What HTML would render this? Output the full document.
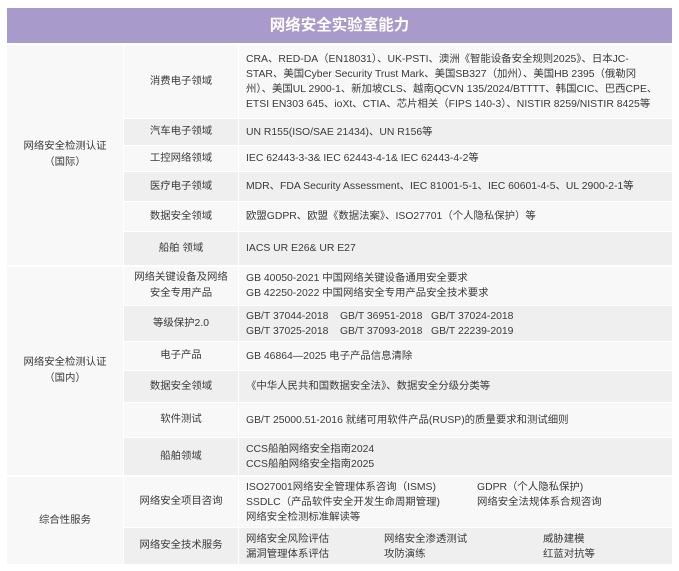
<!DOCTYPE html>
<html><head><meta charset="utf-8"><style>
body{margin:0;background:#fff;width:679px;height:571px;overflow:hidden;font-family:"Liberation Sans","Noto Sans CJK SC",sans-serif;color:#3a3a3a;font-size:10.4px}
.h{position:absolute;left:7px;top:8px;width:665px;height:35px;background:#a89bcb;color:#fff;font-size:15.5px;font-weight:bold;text-align:center;line-height:35px}
.c{position:absolute;display:flex;align-items:center;box-sizing:border-box}
.a{background:#f8f8f8}.g{background:#efefef}
.c1{left:7px;width:116px;justify-content:center;text-align:center;line-height:16px}
.c2{left:124px;width:114px;justify-content:center;text-align:center;line-height:16px}
.c3{left:239px;width:433px;padding-left:7px;line-height:15px;white-space:nowrap}
</style></head><body>
<div class="h">网络安全实验室能力</div>
<div class="c a c1" style="top:45px;height:220px">网络安全检测认证<br>（国际）</div>
<div class="c a c1" style="top:267px;height:208px">网络安全检测认证<br>（国内）</div>
<div class="c a c1" style="top:477px;height:87px">综合性服务</div>

<div class="c a c2" style="top:45px;height:73px">消费电子领域</div>
<div class="c a c3" style="top:45px;height:73px"><div>CRA、RED-DA（EN18031）、UK-PSTI、澳洲《智能设备安全规则2025》、日本JC-<br>STAR、美国Cyber Security Trust Mark、美国SB327（加州）、美国HB 2395（俄勒冈<br>州）、美国UL 2900-1、新加坡CLS、越南QCVN 135/2024/BTTTT、韩国CIC、巴西CPE、<br>ETSI EN303 645、ioXt、CTIA、芯片相关（FIPS 140-3）、NISTIR 8259/NISTIR 8425等</div></div>
<div class="c g c2" style="top:119px;height:26px">汽车电子领域</div>
<div class="c g c3" style="top:119px;height:26px">UN R155(ISO/SAE 21434)、UN R156等</div>
<div class="c a c2" style="top:146px;height:25px">工控网络领域</div>
<div class="c a c3" style="top:146px;height:25px">IEC 62443-3-3&amp; IEC 62443-4-1&amp; IEC 62443-4-2等</div>
<div class="c g c2" style="top:172px;height:29px">医疗电子领域</div>
<div class="c g c3" style="top:172px;height:29px">MDR、FDA Security Assessment、IEC 81001-5-1、IEC 60601-4-5、UL 2900-2-1等</div>
<div class="c a c2" style="top:202px;height:29px">数据安全领域</div>
<div class="c a c3" style="top:202px;height:29px">欧盟GDPR、欧盟《数据法案》、ISO27701（个人隐私保护）等</div>
<div class="c g c2" style="top:232px;height:33px">船舶 领域</div>
<div class="c g c3" style="top:232px;height:33px">IACS UR E26&amp; UR E27</div>

<div class="c a c2" style="top:267px;height:38px">网络关键设备及网络<br>安全专用产品</div>
<div class="c a c3" style="top:267px;height:38px"><div>GB 40050-2021 中国网络关键设备通用安全要求<br>GB 42250-2022 中国网络安全专用产品安全技术要求</div></div>
<div class="c g c2" style="top:306px;height:35px">等级保护2.0</div>
<div class="c g c3" style="top:306px;height:35px"><div>GB/T 37044-2018&nbsp;&nbsp;&nbsp; GB/T 36951-2018&nbsp;&nbsp; GB/T 37024-2018<br>GB/T 37025-2018&nbsp;&nbsp;&nbsp; GB/T 37093-2018&nbsp;&nbsp; GB/T 22239-2019</div></div>
<div class="c a c2" style="top:342px;height:28px">电子产品</div>
<div class="c a c3" style="top:342px;height:28px">GB 46864—2025 电子产品信息清除</div>
<div class="c g c2" style="top:371px;height:31px">数据安全领域</div>
<div class="c g c3" style="top:371px;height:31px">《中华人民共和国数据安全法》、数据安全分级分类等</div>
<div class="c a c2" style="top:403px;height:34px">软件测试</div>
<div class="c a c3" style="top:403px;height:34px">GB/T 25000.51-2016 就绪可用软件产品(RUSP)的质量要求和测试细则</div>
<div class="c g c2" style="top:438px;height:37px">船舶领域</div>
<div class="c g c3" style="top:438px;height:37px"><div>CCS船舶网络安全指南2024<br>CCS船舶网络安全指南2025</div></div>

<div class="c a c2" style="top:477px;height:50px">网络安全项目咨询</div>
<div class="c a c3" style="top:477px;height:50px;position:absolute">
<div style="position:absolute;left:7px;top:3px">ISO27001网络安全管理体系咨询（ISMS)<br>SSDLC（产品软件安全开发生命周期管理)<br>网络安全检测标准解读等</div>
<div style="position:absolute;left:238px;top:3px">GDPR（个人隐私保护)<br>网络安全法规体系合规咨询</div></div>
<div class="c g c2" style="top:528px;height:36px">网络安全技术服务</div>
<div class="c g c3" style="top:528px;height:36px;position:absolute">
<div style="position:absolute;left:7px;top:4px">网络安全风险评估<br>漏洞管理体系评估</div>
<div style="position:absolute;left:145px;top:4px">网络安全渗透测试<br>攻防演练</div>
<div style="position:absolute;left:304px;top:4px">威胁建模<br>红蓝对抗等</div></div>
</body></html>
